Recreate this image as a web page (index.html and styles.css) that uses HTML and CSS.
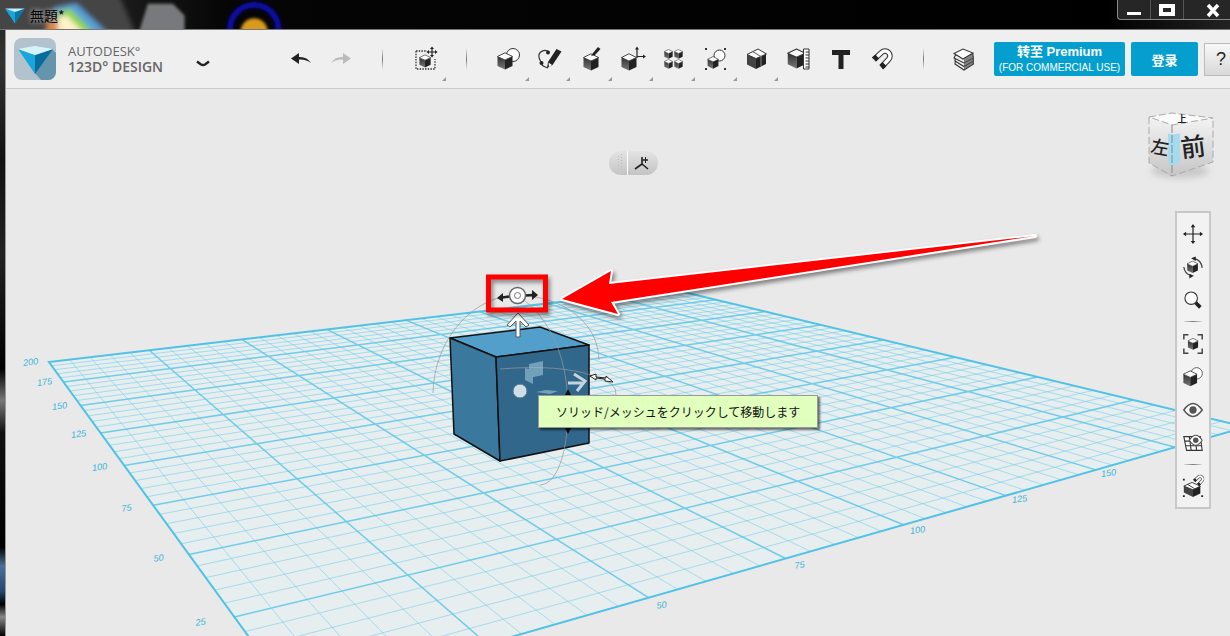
FILE: index.html
```html
<!DOCTYPE html>
<html lang="ja">
<head>
<meta charset="utf-8">
<title>無題* - 123D Design</title>
<link rel="stylesheet" href="styles.css">
</head>
<body>
<svg class="defs" aria-hidden="true">
  <defs>
    <linearGradient id="face" x1="0" y1="0" x2="0" y2="1"><stop offset="0" stop-color="#333"/><stop offset="1" stop-color="#777"/></linearGradient>
    <symbol id="cube" viewBox="0 0 16 18">
      <path d="M.5 4.5 8 8v9.5L.5 14z" fill="url(#face)"/>
      <path d="M15.500 4.500 8 8v9.500l7.500-3.500z" fill="#222"/>
      <path d="M8 .8 15.500 4.500 8 8 .5 4.500z" fill="#fff" stroke="#333" stroke-width=".9" stroke-linejoin="round"/>
    </symbol>
    <symbol id="magnet" viewBox="0 0 24 24">
      <path d="M4 12.500 11.500 5.500A4.900 4.900 0 0 1 18.500 12.500L11.500 20" fill="none" stroke="#333" stroke-width="5.600"/>
      <path d="M4 12.500 11.500 5.500A4.900 4.900 0 0 1 18.500 12.500L11.500 20" fill="none" stroke="#fff" stroke-width="3.600"/>
      <path d="M2 10.500 5.500 7.500 9 11.500 6 14.500zM9.500 18 12.500 15l4 4-3.500 3.500z" fill="#222"/>
    </symbol>
    <symbol id="gem" viewBox="0 0 34 26">
      <path d="M0 0 17 5V26z" fill="#19a5da"/><path d="M34 0 17 5V26z" fill="#0877a8"/><path d="M0 0 17-4 34 0 17 6z" fill="#c9effb"/>
    </symbol>
    <filter id="soft" x="-30%" y="-30%" width="160%" height="160%"><feGaussianBlur stdDeviation="3"/></filter>
    <filter id="smooth" x="-30%" y="-30%" width="160%" height="160%"><feGaussianBlur stdDeviation="1.500"/></filter>
  </defs>
</svg>

<header class="titlebar">
  <svg class="wallpaper" viewBox="0 0 400 30" aria-hidden="true">
    <g filter="url(#soft)">
      <path d="M-20-20H110L140 50H-20z" fill="#444"/>
      <path d="M42 36 50 8l22-4 34 32z" fill="#5aa0d8"/>
      <path d="M44 36 52 12l14-3 26 27z" fill="#8ed64c"/>
      <path d="M44 36 52 17l10-1 20 20z" fill="#fff2c8"/>
      <path d="M40 36 44 20l8 0 2 16z" fill="#e8863c"/>
    </g>
    <g filter="url(#smooth)">
      <path d="M136 36 146 4h26l12 12v20z" fill="#77797c"/>
      <circle cx="256" cy="30" r="25" fill="none" stroke="#0a0aa8" stroke-width="6"/>
      <circle cx="256" cy="33" r="14" fill="#d99a1c"/>
    </g>
  </svg>
  <svg class="title-gem" viewBox="0 -4 34 30" aria-hidden="true"><use href="#gem" width="34" height="26"/></svg>
  <span class="title">無題*</span>
  <div class="win-controls">
    <button aria-label="Minimize"><svg viewBox="0 0 18 16"><path d="M2 10h14v3H2z" fill="#fff"/></svg></button>
    <button aria-label="Maximize"><svg viewBox="0 0 18 16"><path d="M1 2h16v12H1zM5 6v4h8V6z" fill="#fff" fill-rule="evenodd"/></svg></button>
    <button class="close" aria-label="Close"><svg viewBox="0 0 18 16"><path d="M4 3l10 11M14 3 4 14" stroke="#fff" stroke-width="3.500"/></svg></button>
  </div>
</header>

<div class="window">
  <nav class="toolbar">
    <svg class="app-logo" viewBox="0 0 42 42" aria-hidden="true">
      <rect width="42" height="42" rx="8" fill="#b3c3cd"/>
      <path d="M38 11l4 4v19a8 8 0 0 1-8 8h-7l-7-8z" fill="#6595ab"/>
      <path d="M4 11 21 17V36z" fill="#17a6db"/><path d="M39 11 21 17V36z" fill="#056d9c"/><path d="M4 11 21 8l18 3-18 6z" fill="#d5f3fc"/>
    </svg>
    <div class="brand"><span>AUTODESK°</span><span class="brand-name">123D° DESIGN</span></div>
    <button class="menu" aria-label="Menu"><svg width="14" height="8" viewBox="0 0 14 8"><path d="M1 1.500 5 4.500q2 1.200 4 0l4-3" fill="none" stroke="#222" stroke-width="2.500"/></svg></button>
    <div class="history">
      <button class="tool" aria-label="Undo"><svg viewBox="0 0 24 24"><path d="M2 11.500 10 6v4q8-.5 12 6-5-4-12-3.500V17z" fill="#222"/></svg></button>
      <button class="tool" aria-label="Redo"><svg viewBox="0 0 24 24"><path d="M22 11.500 14 6v4q-8-.5-12 6 5-4 12-3.500V17z" fill="#bbb"/></svg></button>
    </div>
    <i class="sep"></i>
    <button class="tool more transform" aria-label="Transform"><svg viewBox="0 0 24 24"><path d="M2 4h11M2 4v18h19V12" fill="none" stroke="#333" stroke-width="1.300" stroke-dasharray="1.500 1.200"/><use href="#cube" x="5" y="7" width="12" height="14"/><path d="M18 1v8M14 5h8" stroke="#222" stroke-width="1.200"/><path d="M18-.5l2 2.500h-4zM18 10.500l2-2.500h-4zM12.500 5l2.500-2v4zM23.500 5 21 3v4z" fill="#222"/></svg></button>
    <i class="sep"></i>
    <div class="tools">
      <button class="tool more" aria-label="Primitives"><svg viewBox="0 0 24 24"><circle cx="17" cy="8" r="6.500" fill="#fff" stroke="#333"/><use href="#cube" x="1" y="5" width="16" height="18"/></svg></button>
      <button class="tool more" aria-label="Sketch"><svg viewBox="0 0 24 24"><path d="M12 5C8 1 1 5 2 10c0 3 3 5 3 8 2 2 4 2 6 3" fill="none" stroke="#333" stroke-width="1.200"/><path d="M10 21l1-6 8.500-13 5 2.500-9 13.500z" fill="#222"/><path d="M11.500 15.500l3.500 2.500-3 2z" fill="#fff"/><circle cx="11" cy="5.500" r="2" fill="#222"/><circle cx="4.500" cy="16" r="2" fill="#222"/></svg></button>
      <button class="tool more" aria-label="Construct"><svg viewBox="0 0 24 24"><use href="#cube" x="4" y="6" width="16" height="18"/><path d="M12 9l2-3 5-6 2.500 2-5.500 6z" fill="#222"/></svg></button>
      <button class="tool more" aria-label="Modify"><svg viewBox="0 0 24 24"><use href="#cube" x="0" y="6" width="16" height="18"/><path d="M16 11V2M16 9.500h6" stroke="#222" stroke-width="1.200"/><path d="M16-.5l2 3h-4zM25 9.500l-3-2v4z" fill="#222"/></svg></button>
      <button class="tool more" aria-label="Pattern"><svg viewBox="0 0 24 24"><use href="#cube" x="2" y="2" width="9" height="10"/><use href="#cube" x="12" y="2" width="9" height="10"/><use href="#cube" x="2" y="12" width="9" height="10"/><use href="#cube" x="12" y="12" width="9" height="10"/></svg></button>
      <button class="tool more" aria-label="Grouping"><svg viewBox="0 0 24 24"><circle cx="15.500" cy="8.500" r="5.500" fill="#fff" stroke="#333"/><use href="#cube" x="3" y="9" width="12" height="13"/><path d="M1 1h2v2H1zM20 1h2v2h-2zM1 21h2v2H1zM20 21h2v2h-2z" fill="#333"/></svg></button>
      <button class="tool more" aria-label="Combine"><svg viewBox="0 0 24 24"><path d="M2 7.500l9 4V22l-9-4.500z" fill="#444"/><path d="M11 11.500l10-4.500v10L11 22z" fill="#222"/><path d="M2 7.500 13 2l8.500 5L11 11.500z" fill="#fff" stroke="#333"/><path d="M7.500 4.500l8.500 5V19" fill="none" stroke="#777" stroke-width="1.200"/></svg></button>
      <button class="tool" aria-label="Measure"><svg viewBox="0 0 24 24"><use href="#cube" x="0" y="1" width="19" height="21"/><path d="M16.500 2H22v20h-5.500z" fill="#fff" stroke="#333"/><path d="M18.500 5H22m-3.500 3H22m-3.500 3H22m-3.500 3H22m-3.500 3H22m-3.500 3H22" stroke="#333"/></svg></button>
      <button class="tool" aria-label="Text tool"><svg viewBox="0 0 24 24"><path d="M3 3h18v5h-6.500v14h-5V8H3z" fill="#222"/></svg></button>
      <button class="tool" aria-label="Snap"><svg viewBox="0 0 24 24"><use href="#magnet" width="24" height="24"/></svg></button>
    </div>
    <i class="sep"></i>
    <button class="tool material" aria-label="Material"><svg viewBox="0 0 24 24"><g fill="#eee" stroke="#333" stroke-width="1.100"><path d="M3 17l9 6 9.500-6-1-5-17 1z"/><path d="M3 14l9 5.500 9.500-5.500-1-5-17 1z"/><path d="M2 11l10 5 9.500-5-1-4-17 1z"/><path d="M2 6.500 11 12l10-6-10-4z" fill="#fff"/></g><path d="M12 22.500l9.500-6V6L12 12z" fill="#555" opacity=".7"/></svg></button>
    <button class="cta premium"><b>转至 Premium</b><small>(FOR COMMERCIAL USE)</small></button>
    <button class="cta login">登录</button>
    <button class="help" aria-label="Help">?</button>
  </nav>

  <main class="stage">
    <svg class="scene" viewBox="6 89 1224 547" preserveAspectRatio="xMidYMid slice" aria-label="3D workspace">
      <g id="grid"></g>
      <g class="axis" id="axis"></g>
      <g stroke="#111" stroke-width="1.500" stroke-linejoin="round">
        <path d="M450 338 540 327 589 345 496 357z" fill="#529fcc"/>
        <path d="M450 338 496 357 500 461 454 434z" fill="#3b789d"/>
        <path d="M496 357 589 345V443L500 461z" fill="#31678a"/>
      </g>
      <g fill="none" stroke="#999" stroke-opacity=".7">
        <path d="M433 393C434 340 472 296 517 295C560 296 598 320 599 360"/>
        <path d="M517 295C552 318 568 360 568 410C568 450 558 484 540 485"/>
        <path d="M500 369Q560 364 594 376Q618 382 616 396"/>
      </g>
      <g fill="#9fc4da" fill-opacity=".6"><path d="M529 364l14-3v14l-14 3zM525 368l8 2v14l-8-4zM536 392l10-2 12 1-8 3z"/></g>
      <circle cx="520" cy="391" r="7" fill="#cfdfe9" stroke="#5b6f7c"/>
      <path d="M568 383h14M574 374l11 7-8 10" fill="none" stroke="#c5d5df" stroke-width="3"/>
      <path d="M568 389l3 6h-6zM568 434l3-6h-6z" fill="#111"/>
      <path d="M590 376l6-2v3l10 1v-2l7 6-8-1v-2l-9-1v2z" fill="#fff" stroke="#222"/>
      <path d="M518 313l11 12-3 2-6-6v16h-4v-16l-6 6-3-2z" fill="#fff" stroke="#555"/>
      <path d="M497 298l6-5v9zM538 295l-6-5v10z" fill="#222"/>
      <path d="M502 297.500l8-1M525 295.500l8-.5" stroke="#222" stroke-width="2.500"/>
      <circle cx="517.500" cy="295.500" r="8" fill="#fff" stroke="#666" stroke-width="1.500"/>
      <circle cx="517.500" cy="295.500" r="3" fill="none" stroke="#777"/>
      <g class="callout">
        <rect x="488.500" y="277" width="57" height="33" fill="none" stroke="#f00" stroke-width="5"/>
        <path class="arrow" d="M562 299 611 271 609 284 1035 236 611 302 618 314z"/>
      </g>
    </svg>

    <div class="pill"><svg viewBox="0 0 49 24" aria-hidden="true"><path d="M12.500 3v18M9.500 5v14" stroke="#bbb" stroke-dasharray="1 2"/><path d="M18.500 0v24" stroke="#fff"/><path d="M33 6v7l-7 5M33 13l6 5M33 9h6" fill="none" stroke="#222" stroke-width="1.600"/><path d="M36.500 6v6" stroke="#222"/></svg></div>

    <svg class="viewcube" viewBox="1140 105 80 80" aria-label="View cube">
      <defs><linearGradient id="vc" x1="0" y1="0" x2="0" y2="1"><stop offset="0" stop-color="#f3f3f3"/><stop offset="1" stop-color="#c6c6c6"/></linearGradient></defs>
      <ellipse cx="1180" cy="171" rx="29" ry="7" fill="#999" opacity=".4" filter="url(#soft)"/>
      <path d="M1149 117 1172 113 1213 118 1172 125z" fill="#fafafa"/>
      <path d="M1149 117l23 8v51l-23-13z" fill="url(#vc)"/><path d="M1172 125l41-7v44l-41 14z" fill="url(#vc)"/>
      <path d="M1168 133.500l4 1 8-1v29l-8 3-4-2z" fill="#a5dbee"/>
      <path d="M1149 117 1172 113 1213 118 1172 125zM1149 117v46l23 13 41-14V118" fill="none" stroke="#aaa" stroke-dasharray="7 3"/>
      <path d="M1172 125v51" stroke="#888" stroke-dasharray="8 2"/>
      <text x="1182" y="122" font-size="9" font-weight="700">上</text>
      <text x="1160" y="154" font-size="18" font-weight="500" transform="rotate(10 1160 147)">左</text>
      <text x="1193" y="156" font-size="25" font-weight="500" transform="rotate(-7 1193 147)">前</text>
    </svg>

    <aside class="nav-panel">
      <button aria-label="Pan"><svg viewBox="0 0 24 24"><path d="M12 3v18M3 12h18" stroke="#222" stroke-width="1.300"/><path d="M12 1l2.500 3.500h-5zM12 23l2.500-3.500h-5zM1 12l3.500-2.500v5zM23 12l-3.500-2.500v5z" fill="#222"/></svg></button>
      <button aria-label="Orbit"><svg viewBox="0 0 24 24"><use href="#cube" x="5" y="5" width="13" height="14"/><path d="M13 3q8 1 9 10M2 12q1 8 8 9" fill="none" stroke="#444" stroke-width="1.400"/><path d="M10 2.500l5-2v5zM13 21.500l-5-2v5z" fill="#222"/></svg></button>
      <button aria-label="Zoom"><svg viewBox="0 0 24 24"><circle cx="10" cy="10" r="6.800" fill="#fff" stroke="#333" stroke-width="1.200"/><path d="M15 15l5 5" stroke="#222" stroke-width="4"/></svg></button>
      <i class="rule"></i>
      <button aria-label="Fit"><svg viewBox="0 0 24 24"><path d="M2 7V2h5M17 2h5v5M22 17v5h-5M7 22H2v-5" fill="none" stroke="#444" stroke-width="1.600"/><use href="#cube" x="6" y="5" width="12" height="14"/></svg></button>
      <button aria-label="Display mode"><svg viewBox="0 0 24 24"><circle cx="16" cy="8" r="6.200" fill="#fff" stroke="#555"/><use href="#cube" x="1" y="4" width="16" height="19"/></svg></button>
      <button aria-label="Visibility"><svg viewBox="0 0 24 24"><path d="M2 12q10-14 20 0-10 14-20 0z" fill="#fff" stroke="#555" stroke-width="1.600"/><circle cx="12" cy="12" r="4" fill="#555"/></svg></button>
      <button aria-label="Grid visibility"><svg viewBox="0 0 24 24"><path d="M2 5h18l2 15H5zM3 10h18M4 15h18M8 5l2 15M14 5l2 15" fill="#fff" stroke="#333" stroke-width="1.200"/><path d="M8 9q7-11 14 0-7 11-14 0z" fill="#fff" stroke="#555" stroke-width="1.200"/><circle cx="15" cy="9" r="3" fill="#555"/></svg></button>
      <i class="rule"></i>
      <button aria-label="Grid snap"><svg viewBox="0 0 24 24"><path d="M2 11l10 4v8L2 18z" fill="#444"/><path d="M12 15l8-4v8l-8 4z" fill="#222"/><path d="M2 11l9-4 9 4-8 4zM6 9l8 5" fill="#fff" stroke="#333"/><use href="#magnet" x="11" y="-2" width="14" height="14"/><path d="M1 3h2v2H1zM1 21h2v2H1zM21 21h2v2h-2z" fill="#222"/></svg></button>
    </aside>

    <div class="tooltip" role="tooltip">ソリッド/メッシュをクリックして移動します</div>
  </main>
</div>
<script src="grid.js"></script>
</body>
</html>
```
FILE: styles.css
```css
* { box-sizing: border-box; }
body {
  margin: 0;
  min-height: 100vh;
  display: flex;
  flex-direction: column;
  overflow: hidden;
  background: linear-gradient(#222 0, #333 10%, #111 25%, #222 40%, #000 58%, #777 63%, #111 68%, #000 86%, #4d6f99 89%, #24466f 93%, #000 95%, #888 97%, #000);
  font-family: "Liberation Sans", "Noto Sans CJK SC", sans-serif;
}
button { border: 0; padding: 0; background: none; font: inherit; color: inherit; }
.defs { position: absolute; width: 0; height: 0; }

.titlebar {
  position: relative;
  display: flex;
  align-items: center;
  flex: none;
  height: 30px;
  padding-left: 5px;
  background: linear-gradient(90deg, #333, #050505 230px, #000 90%, #222);
  border-bottom: 1px solid #777;
}
.wallpaper { position: absolute; left: 0; top: 0; width: 400px; height: 29px; }
.title-gem { position: relative; width: 20px; height: 18px; }
.title {
  position: relative;
  margin-left: 5px;
  font: 14px/20px "Noto Sans CJK JP", sans-serif;
  color: #000;
  text-shadow: 0 0 4px #aaa, 0 0 6px #888;
}
.win-controls {
  display: flex;
  align-self: flex-start;
  height: 20px;
  margin-left: auto;
  border: 1px solid #888;
  border-width: 0 0 1px 1px;
  border-radius: 0 0 0 4px;
  background: #262626;
}
.win-controls button { width: 33px; border-right: 1px solid #555; }
.win-controls .close { width: 46px; padding-left: 12px; border: 0; }
.win-controls svg { display: block; width: 18px; height: 16px; margin: 0 auto; }

.window { flex: 1; display: flex; flex-direction: column; margin-left: 5px; border-left: 1px solid #999; background: #e9e9e9; }
.toolbar {
  display: flex;
  align-items: center;
  height: 59px;
  padding-left: 8px;
  overflow: hidden;
  background: #efefef;
  border-bottom: 1px solid #ccc;
}
.toolbar > * { flex: none; }
.app-logo { width: 42px; height: 42px; }
.brand {
  display: flex;
  flex-direction: column;
  width: 110px;
  margin-left: 12px;
  font: 13px/15px "Open Sans", sans-serif;
  color: #666;
}
.brand-name { font-size: 14px; font-weight: 600; }
.menu { width: 50px; margin-top: 8px; }
.history { display: flex; margin-left: 53px; }
.tool {
  position: relative;
  display: flex;
  justify-content: center;
  align-items: center;
  width: 40px;
  height: 56px;
}
.tool svg { width: 24px; height: 24px; overflow: visible; }
.more::after {
  content: "";
  position: absolute;
  right: 0;
  bottom: 6px;
  border: 2px solid;
  border-color: transparent #999 #999 transparent;
}
.sep { width: 1px; height: 22px; margin: 0 20px; background: linear-gradient(#eee, #777, #eee); }
.transform { width: 41px; }
.tools { display: flex; width: 416px; }
.tools .tool { flex: 1; }
.history + .sep { margin: 0 22px 0 21px; }
.cta {
  height: 34px;
  border-radius: 2px;
  background: #049fcf;
  color: #fff;
}
.premium { display: flex; flex-direction: column; align-items: center; width: 131px; margin-left: 10px; }
.premium b { font-size: 13px; line-height: 20px; }
.premium small { font-size: 10px; line-height: 11px; }
.login { width: 67px; margin-left: 6px; font-size: 13px; font-weight: 700; }
.help {
  width: 34px;
  height: 33px;
  margin-left: 6px;
  border: 1px solid #bbb;
  background: linear-gradient(#f8f8f8, #d8d8d8);
  font-size: 18px;
  color: #222;
}

.stage { position: relative; flex: 1; overflow: hidden; }
.scene { position: absolute; inset: 0; width: 100%; height: 100%; }
.floor { fill: #e6eef0; stroke: none; }
.minor { fill: none; stroke: #66c9e6; stroke-opacity: .5; }
.major { fill: none; stroke: #5cc6e6; stroke-opacity: .85; stroke-width: 1.5; }
.edge { fill: none; stroke: #4fc2e5; stroke-width: 2; }
.axis { fill: #35b4d8; font: italic 9px "Liberation Sans", sans-serif; text-anchor: middle; }
.callout { filter: drop-shadow(2px 3px 2px rgba(0, 0, 0, .45)); }
.arrow { fill: #f00; stroke: #fff; stroke-width: 4; stroke-linejoin: round; paint-order: stroke; }

.pill {
  position: absolute;
  left: calc(50% - 9px);
  top: 62px;
  width: 49px;
  height: 24px;
  border-radius: 12px;
  background: linear-gradient(#e4e4e4, #c4c4c4);
}
.pill svg { display: block; width: 49px; height: 24px; }
.viewcube { position: absolute; right: 10px; top: 16px; width: 80px; height: 80px; }
.viewcube text { font-family: "Noto Sans CJK SC", sans-serif; fill: #222; text-anchor: middle; }

.nav-panel {
  position: absolute;
  right: 19px;
  top: 122px;
  display: flex;
  flex-direction: column;
  align-items: center;
  width: 36px;
  padding: 4px 0;
  border: 2px solid #c8c8c8;
  background: #f2f2f2;
}
.nav-panel button { display: flex; align-items: center; justify-content: center; width: 32px; height: 33px; }
.nav-panel button svg { width: 22px; height: 22px; overflow: visible; }
.rule { width: 18px; height: 1px; margin: 5px 0; background: linear-gradient(90deg, #ddd, #777, #ddd); }

.tooltip {
  position: absolute;
  left: 532px;
  top: 306px;
  padding: 6px 17px 5px;
  border: 1px solid #999;
  background: #e1ffbd;
  box-shadow: 2px 2px 2px rgba(0, 0, 0, .55);
  font: 12px/20px "Noto Sans CJK JP", sans-serif;
  color: #111;
  white-space: nowrap;
}
```
FILE: grid.js
```js
const NS = "http://www.w3.org/2000/svg";
const grid = document.getElementById("grid");
const axis = document.getElementById("axis");

// Screen corners of the work plane: origin, x end, far corner, y end.
const [p0, p1, p2, p3] = [[294, 699], [1246, 427], [671, 289], [49, 362]];

// Unit square to quadrilateral projection.
const dx1 = p1[0] - p2[0], dx2 = p3[0] - p2[0], sx = p0[0] - p1[0] + p2[0] - p3[0];
const dy1 = p1[1] - p2[1], dy2 = p3[1] - p2[1], sy = p0[1] - p1[1] + p2[1] - p3[1];
const det = dx1 * dy2 - dx2 * dy1;
const g = (sx * dy2 - dx2 * sy) / det;
const h = (dx1 * sy - sx * dy1) / det;

function project(u, v) {
  const w = g * u + h * v + 1;
  const at = (k) => ((p1[k] - p0[k] + g * p1[k]) * u + (p3[k] - p0[k] + h * p3[k]) * v + p0[k]) / w;
  return at(0).toFixed(1) + " " + at(1).toFixed(1);
}

function path(d, cls) {
  const el = document.createElementNS(NS, "path");
  el.setAttribute("d", d);
  el.setAttribute("class", cls);
  grid.append(el);
}

const outline = `M${project(0, 0)}L${project(1, 0)}L${project(1, 1)}L${project(0, 1)}z`;
path(outline, "floor");
let minor = "", major = "";
for (let i = 1; i < 40; i++) {
  const t = i / 40;
  const d = `M${project(t, 0)}L${project(t, 1)}M${project(0, t)}L${project(1, t)}`;
  if (i % 5) minor += d; else major += d;
}
path(minor, "minor");
path(major, "major");
path(outline, "edge");

const labels = [
  [200, 31, 365], [175, 45, 385], [150, 60, 409], [125, 79, 437], [100, 100, 470],
  [75, 127, 511], [50, 159, 561], [25, 201, 625],
  [50, 662, 608], [75, 800, 568], [100, 918, 533], [125, 1020, 502], [150, 1109, 476]
];
for (const [value, x, y] of labels) {
  const el = document.createElementNS(NS, "text");
  el.setAttribute("x", x);
  el.setAttribute("y", y);
  el.setAttribute("transform", `rotate(-8 ${x} ${y})`);
  el.textContent = value;
  axis.append(el);
}
```
